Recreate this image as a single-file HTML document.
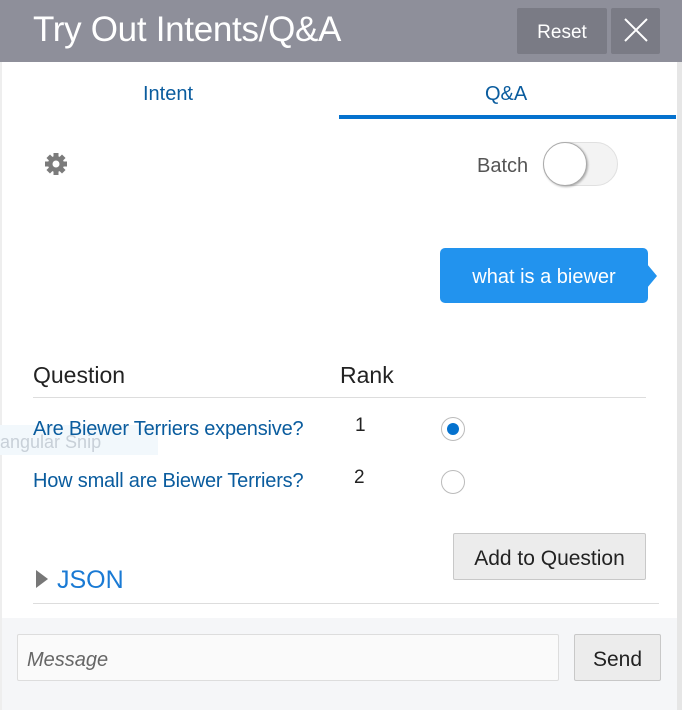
<!DOCTYPE html>
<html><head><style>
*{margin:0;padding:0;box-sizing:border-box}
body{width:682px;height:710px;position:relative;background:#fff;font-family:"Liberation Sans",sans-serif;overflow:hidden}
.a{position:absolute}
</style></head><body>
<div class="a" style="left:0;top:0;width:682px;height:62px;background:#8e8f9a"></div>
<div class="a" style="left:33px;top:10px;color:#fff;font-size:35px;letter-spacing:-0.3px">Try Out Intents/Q&amp;A</div>
<div class="a" style="left:517px;top:8px;width:90px;height:46px;background:#7a7b85;border-radius:2px;color:#fff;font-size:19px;text-align:center;line-height:49px">Reset</div>
<div class="a" style="left:611px;top:8px;width:49px;height:46px;background:#7a7b85;border-radius:2px"></div>
<svg class="a" style="left:623px;top:17px" width="26" height="26"><path d="M2 2L24 24M24 2L2 24" stroke="#fff" stroke-width="2"/></svg>
<div class="a" style="left:677px;top:62px;width:5px;height:648px;background:#e6e6e6"></div>
<div class="a" style="left:0;top:62px;width:2px;height:648px;background:#eee"></div>
<div class="a" style="left:143px;top:83px;color:#0a5c9e;font-size:20px">Intent</div>
<div class="a" style="left:485px;top:83px;color:#0a5c9e;font-size:20px">Q&amp;A</div>
<div class="a" style="left:339px;top:115px;width:337px;height:4px;background:#0572ce"></div>
<svg class="a" style="left:44px;top:152px" width="24" height="24" viewBox="0 0 24 24"><g fill="#7b7b7b"><circle cx="12" cy="12" r="8"/><g transform="translate(12 12)"><rect x="-2.5" y="-11" width="5" height="22"/><rect x="-2.5" y="-11" width="5" height="22" transform="rotate(45)"/><rect x="-2.5" y="-11" width="5" height="22" transform="rotate(90)"/><rect x="-2.5" y="-11" width="5" height="22" transform="rotate(135)"/></g></g><circle cx="12" cy="12" r="3.5" fill="#fff"/></svg>
<div class="a" style="left:477px;top:155px;color:#555;font-size:20px">Batch</div>
<div class="a" style="left:543px;top:142px;width:75px;height:44px;border-radius:22px;background:#f3f3f3;border:1px solid #e0e0e0"></div>
<div class="a" style="left:543px;top:142px;width:44px;height:44px;border-radius:50%;background:#fff;border:1px solid #aaa;box-shadow:1px 1px 2px rgba(0,0,0,.3)"></div>
<div class="a" style="left:440px;top:248px;width:208px;height:55px;background:#2293ee;border-radius:5px;color:#fff;font-size:20px;line-height:58px;text-align:center">what is a biewer</div>
<div class="a" style="left:647px;top:264px;width:0;height:0;border-top:12px solid transparent;border-bottom:12px solid transparent;border-left:10px solid #2293ee"></div>
<div class="a" style="left:33px;top:362px;color:#222;font-size:23px">Question</div>
<div class="a" style="left:340px;top:362px;color:#222;font-size:23px">Rank</div>
<div class="a" style="left:33px;top:397px;width:613px;height:1px;background:#ddd"></div>
<div class="a" style="left:0;top:425px;width:158px;height:30px;background:#f2f8fc;color:#c8d0d8;font-size:18px;line-height:34px">angular Snip</div>
<div class="a" style="left:33px;top:418px;color:#0a5c9e;font-size:20px;letter-spacing:-0.2px">Are Biewer Terriers expensive?</div>
<div class="a" style="left:355px;top:415px;color:#222;font-size:19px">1</div>
<div class="a" style="left:441px;top:417px;width:24px;height:24px;border-radius:50%;border:1px solid #bbb;background:#fff"></div>
<div class="a" style="left:447px;top:423px;width:12px;height:12px;border-radius:50%;background:#0572ce"></div>
<div class="a" style="left:33px;top:470px;color:#0a5c9e;font-size:20px;letter-spacing:-0.2px">How small are Biewer Terriers?</div>
<div class="a" style="left:354px;top:467px;color:#222;font-size:19px">2</div>
<div class="a" style="left:441px;top:470px;width:24px;height:24px;border-radius:50%;border:1px solid #bbb;background:#fff"></div>
<div class="a" style="left:453px;top:533px;width:193px;height:47px;background:#ececec;border:1px solid #c8c8c8;border-radius:2px;color:#222;font-size:21px;line-height:49px;text-align:center">Add to Question</div>
<div class="a" style="left:36px;top:570px;width:0;height:0;border-top:9px solid transparent;border-bottom:9px solid transparent;border-left:12px solid #777"></div>
<div class="a" style="left:57px;top:566px;color:#1a7ad4;font-size:25px">JSON</div>
<div class="a" style="left:33px;top:603px;width:626px;height:1px;background:#ddd"></div>
<div class="a" style="left:2px;top:618px;width:675px;height:92px;background:#f5f6f8"></div>
<div class="a" style="left:17px;top:634px;width:542px;height:47px;background:#fafafa;border:1px solid #ddd;border-radius:2px;color:#666;font-style:italic;font-size:20px;line-height:50px;padding-left:9px">Message</div>
<div class="a" style="left:574px;top:634px;width:87px;height:47px;background:#ececec;border:1px solid #c8c8c8;border-radius:2px;color:#222;font-size:21px;line-height:50px;text-align:center">Send</div>
</body></html>
